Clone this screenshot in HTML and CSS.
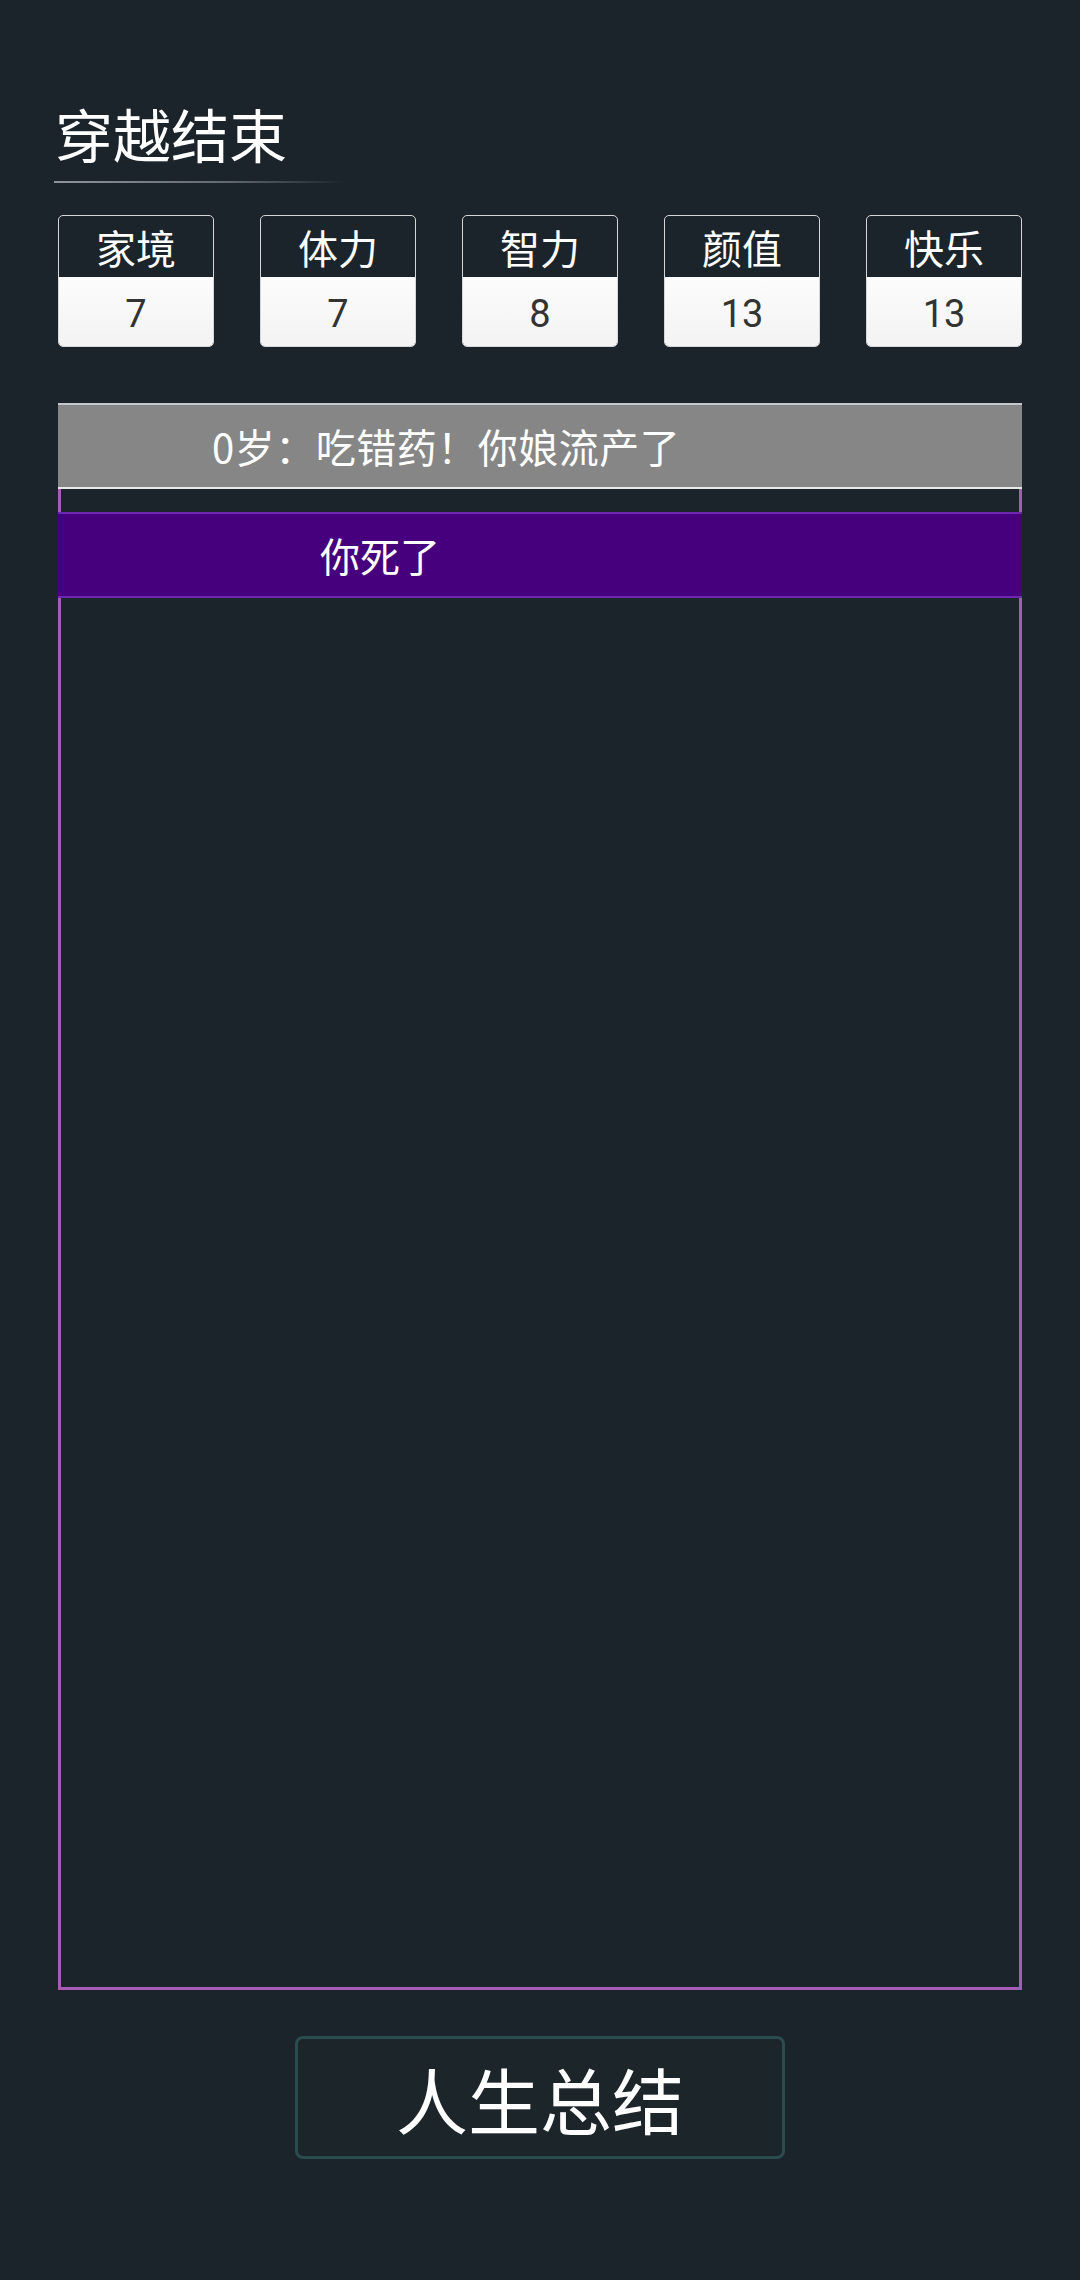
FILE: index.html
```html
<!DOCTYPE html>
<html lang="zh-CN">
<head>
<meta charset="utf-8">
<title>穿越结束</title>
<link rel="stylesheet" href="styles.css">
</head>
<body>
<div class="page">
  <h1 class="title">穿越结束</h1>
  <div class="title-line"></div>

  <div class="stats">
    <div class="stat"><div class="stat-label">家境</div><div class="stat-value">7</div></div>
    <div class="stat"><div class="stat-label">体力</div><div class="stat-value">7</div></div>
    <div class="stat"><div class="stat-label">智力</div><div class="stat-value">8</div></div>
    <div class="stat"><div class="stat-label">颜值</div><div class="stat-value">13</div></div>
    <div class="stat"><div class="stat-label">快乐</div><div class="stat-value">13</div></div>
  </div>

  <div class="log">
    <div class="log-item log-item--normal">0岁：吃错药！你娘流产了</div>
    <div class="log-item log-item--death">你死了</div>
  </div>

  <div class="actions">
    <button class="summary-btn">人生总结</button>
  </div>
</div>
</body>
</html>
```

FILE: styles.css
```css
html, body {
  margin: 0;
  padding: 0;
  background: #1c242b;
}

body {
  font-family: "Noto Sans CJK SC", "Noto Sans", sans-serif;
  color: #ffffff;
}

.page {
  width: 1080px;
  box-sizing: border-box;
  padding: 101px 58px 0;
}

.title {
  margin: 0 0 0 -3px;
  font-size: 58px;
  line-height: 64px;
  font-weight: 400;
  color: #ffffff;
}

.title-line {
  margin-top: 16px;
  margin-left: -4px;
  width: 292px;
  height: 2px;
  background: linear-gradient(to right, #8e959c 0%, rgba(142, 149, 156, 0.6) 60%, rgba(142, 149, 156, 0) 100%);
}

.stats {
  margin-top: 32px;
  display: flex;
  justify-content: space-between;
}

.stat {
  width: 156px;
  height: 132px;
  box-sizing: border-box;
  border: 1px solid #d6d6d8;
  border-radius: 5px;
  overflow: hidden;
  display: flex;
  flex-direction: column;
}

.stat-label {
  height: 61px;
  display: flex;
  align-items: center;
  justify-content: center;
  font-size: 40px;
  color: #ffffff;
}

.stat-value {
  flex: 1;
  display: flex;
  align-items: center;
  justify-content: center;
  padding-top: 4px;
  background: linear-gradient(#fcfcfc, #f3f3f3);
  color: #333333;
  font-family: Roboto, "Noto Sans CJK SC", sans-serif;
  font-size: 38px;
}

.log {
  margin-top: 56px;
  height: 1587px;
  box-sizing: border-box;
  border: 3px solid #a55cb6;
  border-top: none;
}

.log-item {
  height: 86px;
  box-sizing: border-box;
  margin: 0 -3px;
  display: flex;
  align-items: center;
  font-size: 40px;
  color: #ffffff;
  white-space: nowrap;
}

.log-item--normal {
  background: #868686;
  border-top: 2px solid #c6c6ce;
  border-bottom: 2px solid #e8e8ea;
  padding-left: 154px;
  letter-spacing: 0.5px;
}

.log-item--death {
  margin-top: 23px;
  background: #46007e;
  border-top: 2px solid #6e26b2;
  border-bottom: 2px solid #6e26b2;
  padding-left: 262px;
}

.actions {
  margin-top: 46px;
  display: flex;
  justify-content: center;
}

.summary-btn {
  width: 490px;
  height: 123px;
  box-sizing: border-box;
  border: 3px solid #2b4c4f;
  border-radius: 8px;
  background: #1c2529;
  color: #ffffff;
  font-family: "Noto Sans CJK SC", sans-serif;
  font-size: 72px;
  line-height: 1;
  padding: 0;
}
```
